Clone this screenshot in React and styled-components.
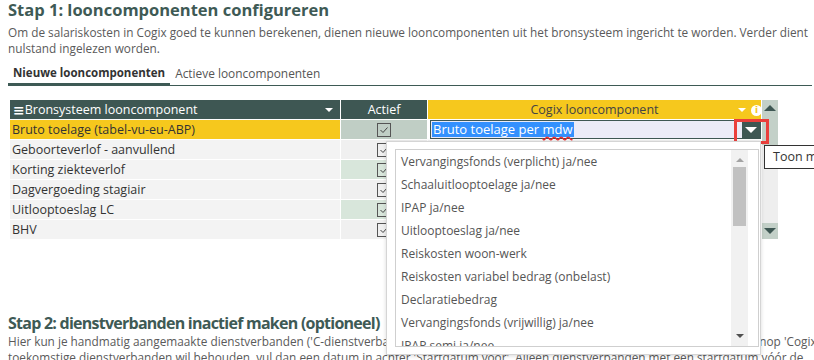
import React from "react";
import styled, { createGlobalStyle } from "styled-components";

const Global = createGlobalStyle`
  html, body { margin: 0; padding: 0; background: #fff; }
  body { font-family: "Open Sans", "Liberation Sans", sans-serif; color: #555; }
`;

const Page = styled.div`
  position: relative;
  width: 814px;
  height: 360px;
  overflow: hidden;
  padding-left: 8px;
  box-sizing: border-box;
`;

const Heading = styled.h2`
  margin: ${(p) => p.$mt || 0}px 0 0 0;
  font-size: ${(p) => p.$fs || 16.5}px;
  line-height: 20px;
  font-weight: 700;
  letter-spacing: ${(p) => p.$ls || 0}px;
  color: #3e5a55;
  white-space: nowrap;
`;

const Para = styled.p`
  margin: ${(p) => p.$mt || 0}px 0 0 0;
  font-size: 11.8px;
  line-height: 16px;
  color: #5a5a5a;
  white-space: nowrap;
`;

const Tabs = styled.div`
  display: flex;
  margin-top: 10px;
  border-bottom: 1px solid #3e5a55;
  width: 804px;
`;

const Tab = styled.div`
  padding: 0 5px 3px 5px;
  font-size: ${(p) => (p.$active ? 11.5 : 11.9)}px;
  line-height: 14px;
  color: ${(p) => (p.$active ? "#333" : "#555")};
  font-weight: ${(p) => (p.$active ? 700 : 400)};
  border-bottom: 3px solid ${(p) => (p.$active ? "#3e5a55" : "transparent")};
  margin-bottom: -1px;
`;

const GridWrap = styled.div`
  margin-top: 14px;
  margin-left: 2px;
  display: flex;
`;

const Grid = styled.div`
  display: grid;
  grid-template-columns: 330px 86px 333px;
  column-gap: 1px;
  row-gap: 1px;
`;

const HeadCell = styled.div`
  height: 19px;
  background: ${(p) => (p.$yellow ? "#f6c81d" : "#3e5753")};
  color: ${(p) => (p.$yellow ? "#444" : "#fff")};
  font-size: 12.5px;
  display: flex;
  align-items: center;
  justify-content: ${(p) => (p.$left ? "flex-start" : "center")};
  position: relative;
  padding: 0 3px;
`;

const Burger = styled.span`
  font-family: "DejaVu Sans", sans-serif;
  font-weight: 700;
  font-size: 14px;
  line-height: 14px;
`;

const HeadArrow = styled.span`
  position: absolute;
  right: ${(p) => p.$r || 7}px;
  top: 8px;
  width: 0;
  height: 0;
  border-left: 4px solid transparent;
  border-right: 4px solid transparent;
  border-top: 4px solid #fff;
`;

const InfoDot = styled.span`
  position: absolute;
  right: -1px;
  top: 5px;
  width: 11px;
  height: 11px;
  border-radius: 50%;
  background: #fff;
  color: #f6c81d;
  font-size: 9px;
  font-weight: 700;
  line-height: 11px;
  text-align: center;
  font-family: "DejaVu Sans", sans-serif;
`;

const Cell = styled.div`
  height: 19px;
  background: ${(p) => p.$bg};
  color: #333;
  font-size: 12.5px;
  display: flex;
  align-items: center;
  justify-content: ${(p) => (p.$center ? "center" : "flex-start")};
  padding: 0 2px;
  white-space: nowrap;
`;

const Check = styled.span`
  width: 12px;
  height: 12px;
  border: 1px solid #555;
  background: transparent;
  display: inline-flex;
  align-items: center;
  justify-content: center;
`;

const Editor = styled.div`
  height: 19px;
  background: #ebebf7;
  border: 1px solid #3e5753;
  box-sizing: border-box;
  margin-left: 2px;
  display: flex;
  align-items: center;
  position: relative;
`;

const Selected = styled.span`
  background: #3390fd;
  color: #fff;
  font-size: 13px;
  line-height: 15px;
  margin-left: 1px;
  padding: 0 1px;
  text-decoration: underline wavy #e22;
  text-decoration-skip-ink: none;
  text-underline-offset: 2px;
`;

const Plain = styled.span`
  text-decoration: none;
  display: inline-block;
`;

const DropBtn = styled.span`
  position: absolute;
  right: 0;
  top: 1px;
  width: 18px;
  height: 16px;
  background: #3e5753;
  display: flex;
  align-items: center;
  justify-content: center;
  &::after {
    content: "";
    border-left: 6px solid transparent;
    border-right: 6px solid transparent;
    border-top: 6px solid #fff;
  }
`;

const ScrollCol = styled.div`
  width: 16px;
  margin-left: 1px;
  display: flex;
  flex-direction: column;
  background: #eeeeee;
  height: 139px;
`;

const ScrollBtn = styled.div`
  height: ${(p) => p.$h || 16}px;
  background: #c3d0c8;
  display: flex;
  align-items: ${(p) => (p.$top ? "flex-start" : "center")};
  padding-top: ${(p) => (p.$top ? 5 : 0)}px;
  justify-content: center;
  margin-top: ${(p) => (p.$bottom ? "auto" : 0)};
  &::after {
    content: "";
    border-left: 6px solid transparent;
    border-right: 6px solid transparent;
    ${(p) => (p.$up ? "border-bottom: 6px solid #3e5753;" : "border-top: 6px solid #3e5753;")}
  }
`;

const RedBox = styled.div`
  position: absolute;
  left: 734px;
  top: 119px;
  width: 35px;
  height: 25px;
  border: 3px solid #ea3f3c;
  box-sizing: border-box;
`;

const Tooltip = styled.div`
  position: absolute;
  left: 764px;
  top: 145px;
  height: 22px;
  padding: 0 8px 0 8px;
  border: 1px solid #333;
  background: #fff;
  font-size: 12.5px;
  line-height: 21px;
  color: #333;
  white-space: nowrap;
`;

const Popup = styled.div`
  position: absolute;
  left: 386px;
  top: 141px;
  width: 375px;
  height: 214px;
  background: #fff;
  border: 1px solid #d5d5d5;
  box-shadow: 0 1px 4px rgba(0, 0, 0, 0.15);
  box-sizing: border-box;
  padding: 7px 1px 0 8px;
`;

const List = styled.div`
  height: 198px;
  border: 1px solid #cfcfcf;
  box-sizing: border-box;
  display: flex;
  overflow: hidden;
`;

const Items = styled.div`
  flex: 1;
`;

const Item = styled.div`
  height: 23px;
  line-height: 23px;
  padding-left: 5px;
  font-size: 12px;
  color: #555;
  white-space: nowrap;
`;

const VScroll = styled.div`
  width: 17px;
  background: #f1f1f1;
  margin-right: 10px;
  display: flex;
  flex-direction: column;
  align-items: center;
`;

const Arrow = styled.span`
  margin-top: ${(p) => p.$mt}px;
  border-left: 4px solid transparent;
  border-right: 4px solid transparent;
  ${(p) => (p.$up ? "border-bottom: 4px solid #a3a3a3;" : "border-top: 4px solid #505050;")}
`;

const Thumb = styled.div`
  width: 13px;
  height: 59px;
  background: #c1c1c1;
  margin-top: 5px;
`;

const CheckIcon = () => (
  <svg width="10" height="10" viewBox="0 0 10 10">
    <path d="M1.5 5 L4 7.5 L8.5 2.5" fill="none" stroke="#444" strokeWidth="1" />
  </svg>
);

const rows = [
  "Bruto toelage (tabel-vu-eu-ABP)",
  "Geboorteverlof - aanvullend",
  "Korting ziekteverlof",
  "Dagvergoeding stagiair",
  "Uitlooptoeslag LC",
  "BHV",
];

const options = [
  "Vervangingsfonds (verplicht) ja/nee",
  "Schaaluitlooptoelage ja/nee",
  "IPAP ja/nee",
  "Uitlooptoeslag ja/nee",
  "Reiskosten woon-werk",
  "Reiskosten variabel bedrag (onbelast)",
  "Declaratiebedrag",
  "Vervangingsfonds (vrijwillig) ja/nee",
  "IPAP semi ja/nee",
];

export default function App() {
  return (
    <Page>
      <Global />
      <Heading>Stap 1: looncomponenten configureren</Heading>
      <Para $mt={4}>
        Om de salariskosten in Cogix goed te kunnen berekenen, dienen nieuwe looncomponenten uit het bronsysteem ingericht te worden. Verder dient
        <br />
        nulstand ingelezen worden.
      </Para>
      <Tabs>
        <Tab $active>Nieuwe looncomponenten</Tab>
        <Tab>Actieve looncomponenten</Tab>
      </Tabs>
      <GridWrap>
        <Grid>
          <HeadCell $left>
            <Burger>≡</Burger>Bronsysteem looncomponent
            <HeadArrow />
          </HeadCell>
          <HeadCell>Actief</HeadCell>
          <HeadCell $yellow>
            Cogix looncomponent
            <HeadArrow $r={15} />
            <InfoDot>i</InfoDot>
          </HeadCell>
          {rows.map((r, i) => (
            <React.Fragment key={r}>
              <Cell $bg={i === 0 ? "#f6c81d" : "#f3f3f3"}>{r}</Cell>
              <Cell $center $bg={i === 0 ? "#c0cec5" : i % 2 === 0 ? "#d8e6db" : "#f0f0f0"}>
                <Check>
                  <CheckIcon />
                </Check>
              </Cell>
              {i === 0 ? (
                <Editor>
                  <Selected>
                    <Plain>Bruto toelage per&nbsp;</Plain>mdw
                  </Selected>
                  <DropBtn />
                </Editor>
              ) : (
                <Cell $bg={i % 2 === 0 ? "#d8e6db" : "#f3f3f3"} />
              )}
            </React.Fragment>
          ))}
        </Grid>
        <ScrollCol>
          <ScrollBtn $up $top $h={40} />
          <ScrollBtn $bottom />
        </ScrollCol>
      </GridWrap>
      <Heading $mt={74} $fs={16} $ls={-0.75}>Stap 2: dienstverbanden inactief maken (optioneel)</Heading>
      <Para $mt={0}>
        Hier kun je handmatig aangemaakte dienstverbanden ('C-dienstverbanden') inactief maken. Selecteer de dienstverbanden en klik op de knop 'Cogix
        <br />
        toekomstige dienstverbanden wil behouden, vul dan een datum in achter 'Startdatum voor'. Alleen dienstverbanden met een startdatum vóór de
      </Para>
      <RedBox />
      <Tooltip>Toon mogelijke waarden</Tooltip>
      <Popup>
        <List>
          <Items>
            {options.map((o) => (
              <Item key={o}>{o}</Item>
            ))}
          </Items>
          <VScroll>
            <Arrow $up $mt={8} />
            <Thumb />
            <Arrow $mt={108} />
          </VScroll>
        </List>
      </Popup>
    </Page>
  );
}
